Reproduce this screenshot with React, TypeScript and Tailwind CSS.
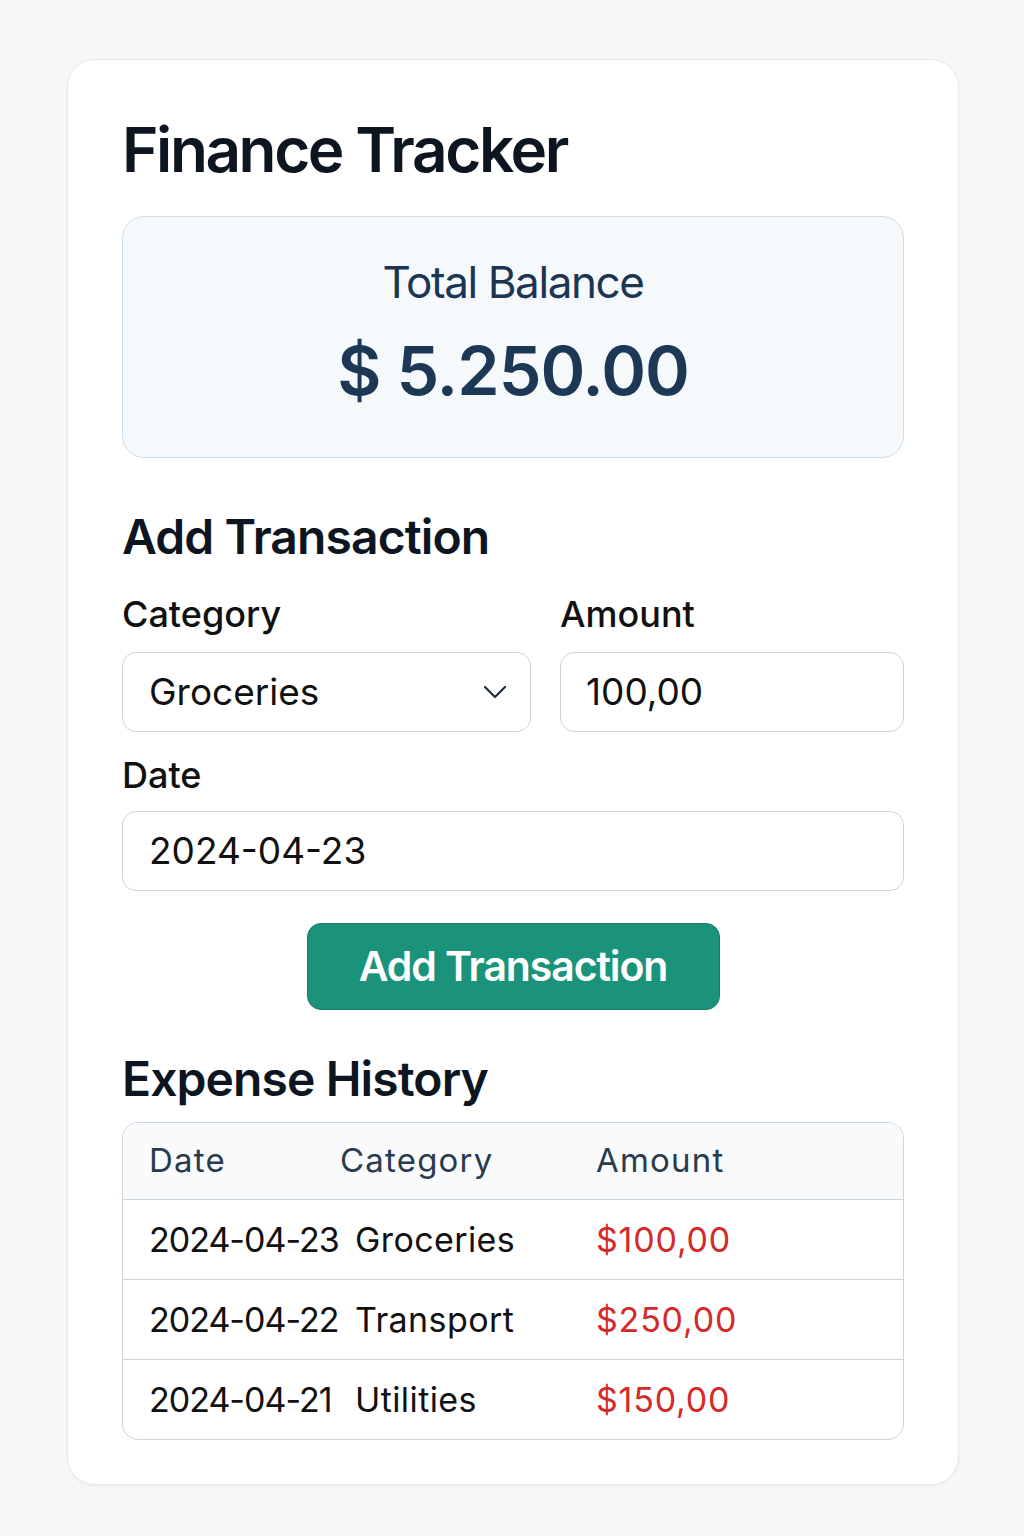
const transactions = [
  { date: '2024-04-23', category: 'Groceries', amount: '$100,00' },
  { date: '2024-04-22', category: 'Transport', amount: '$250,00' },
  { date: '2024-04-21', category: 'Utilities', amount: '$150,00' },
]

function Chevron() {
  return (
    <svg className="h-[14px] w-6 text-[#1f2d3d]" fill="none" stroke="currentColor" strokeLinecap="round" strokeLinejoin="round" strokeWidth={2.2} viewBox="0 0 24 14">
      <path d="M2 2l10 10L22 2" />
    </svg>
  )
}

export default function App() {
  return (
    <div className="min-h-[1536px] w-full bg-[#f8f7f5] pl-[67px] pr-[65px] pt-[59px] font-['Inter',sans-serif]">
      <div className="rounded-[28px] border border-[#ebe9e6] bg-white px-[54px] pb-[44px] pt-[52px] shadow-[0_1px_3px_rgba(0,0,0,0.06)]">
        <h1 className="text-[62px] font-semibold leading-[76px] tracking-[-2.4px] text-[#0d1620]">Finance Tracker</h1>

        <div className="mt-[28px] flex h-[242px] flex-col items-center rounded-[22px] border border-[#cfdde8] bg-[#f5f9fc] pt-[37px]">
          <div className="text-[44px] leading-[56px] tracking-[-1.4px] text-[#1c3552]">Total Balance</div>
          <div className="mt-[20px] text-[68px] font-semibold leading-[80px] tracking-[-1px] text-[#1d3855]">$ 5.250.00</div>
        </div>

        <h2 className="mt-[49px] text-[48px] font-semibold leading-[60px] tracking-[-0.9px] text-[#0d1620]">Add Transaction</h2>

        <div className="mt-[26px] grid grid-cols-[409px_1fr] gap-x-[29px]">
          <div>
            <div className="text-[36px] font-medium leading-[42px] text-[#111]">Category</div>
            <div className="mt-[17px] flex h-[80px] items-center justify-between rounded-[14px] border border-[#cbd6e0] bg-white pl-[26px] pr-[23px]">
              <span className="text-[37px] text-[#111]">Groceries</span>
              <Chevron />
            </div>
          </div>
          <div>
            <div className="text-[36px] font-medium leading-[42px] text-[#111]">Amount</div>
            <div className="mt-[17px] flex h-[80px] items-center rounded-[14px] border border-[#cbd6e0] bg-white pl-[25px]">
              <span className="text-[37px] text-[#111]">100,00</span>
            </div>
          </div>
        </div>

        <div className="mt-[22px] text-[36px] font-medium leading-[42px] text-[#111]">Date</div>
        <div className="mt-[15px] flex h-[80px] items-center rounded-[14px] border border-[#cbd6e0] bg-white pl-[26px]">
          <span className="text-[37px] text-[#111]">2024-04-23</span>
        </div>

        <div className="mt-[32px] flex justify-center">
          <button className="h-[87px] w-[413px] rounded-[14px] border border-[#167d67] bg-[#1b937b] text-[41px] font-semibold tracking-[-1.1px] text-white" type="button">
            Add Transaction
          </button>
        </div>

        <h2 className="mt-[39px] text-[48px] font-semibold leading-[60px] tracking-[-0.9px] text-[#0d1620]">Expense History</h2>

        <div className="mt-[13px] overflow-hidden rounded-[16px] border border-[#cbd6e0]">
          <div className="grid h-[76px] grid-cols-[217px_256px_1fr] items-center bg-[#f8fafc] text-[33px] tracking-[1.2px] text-[#2a3b4f]">
            <span className="pl-[26px]">Date</span>
            <span>Category</span>
            <span>Amount</span>
          </div>
          {transactions.map((t) => (
            <div className="grid h-[80px] grid-cols-[232px_241px_1fr] items-center border-t border-[#cbd6e0] text-[34px] text-[#111]" key={t.date}>
              <span className="whitespace-nowrap pl-[26px] tracking-[-1px]">{t.date}</span>
              <span className="tracking-[0.4px]">{t.category}</span>
              <span className="tracking-[0.8px] text-[#d32a2a]">{t.amount}</span>
            </div>
          ))}
        </div>
      </div>
    </div>
  )
}
